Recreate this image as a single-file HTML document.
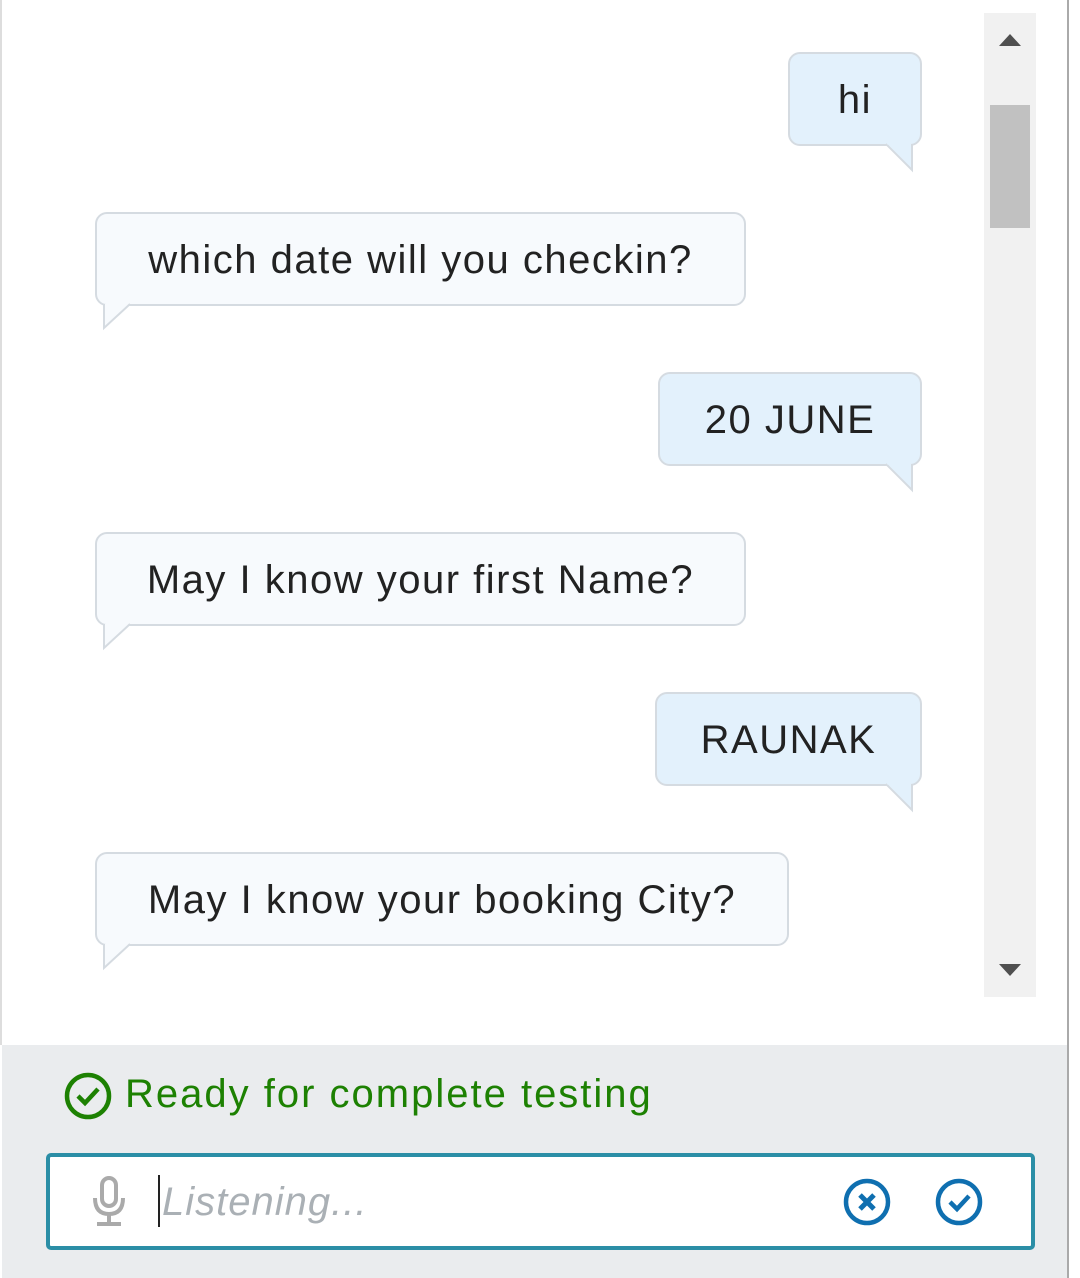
<!DOCTYPE html>
<html><head><meta charset="utf-8"><style>
body{margin:0;width:1080px;height:1278px;background:#fff;position:relative;overflow:hidden;font-family:"Liberation Sans",sans-serif;}
.b{position:absolute;height:94px;border:2px solid #d5dbe1;border-radius:12px;box-sizing:border-box;font-size:40px;letter-spacing:1.5px;color:#222;line-height:92px;text-align:center;white-space:nowrap;}
.u{background:#e3f1fc;}
.t{background:#f7fafd;}
svg.tail{position:absolute;overflow:visible}
</style></head><body>
<div style="position:absolute;left:0;top:0;width:2px;height:1045px;background:#ddd"></div>
<div style="position:absolute;left:1067px;top:0;width:2px;height:1278px;background:#aaa"></div>
<div style="position:absolute;left:984px;top:13px;width:52px;height:984px;background:#f1f1f1"></div>
<div style="position:absolute;left:990px;top:105px;width:40px;height:123px;background:#c1c1c1"></div>
<div style="position:absolute;left:999px;top:34px;width:0;height:0;border-left:11px solid transparent;border-right:11px solid transparent;border-bottom:12px solid #505050"></div>
<div style="position:absolute;left:999px;top:964px;width:0;height:0;border-left:11px solid transparent;border-right:11px solid transparent;border-top:12px solid #505050"></div>

<div class="b u" style="left:788px;top:52px;width:134px">hi</div>
<svg class="tail" style="left:0;top:0" width="1" height="1"><path d="M886 144 L912 170 L912 144" fill="#e3f1fc" stroke="#d5dbe1" stroke-width="2"/><path d="M887 143 L910 143" stroke="#e3f1fc" stroke-width="3"/></svg>

<div class="b t" style="left:95px;top:212px;width:651px">which date will you checkin?</div>
<svg class="tail" style="left:0;top:0" width="1" height="1"><path d="M104 304 L104 328 L130 304" fill="#f7fafd" stroke="#d5dbe1" stroke-width="2"/><path d="M106 303 L128 303" stroke="#f7fafd" stroke-width="3"/></svg>

<div class="b u" style="left:658px;top:372px;width:264px">20 JUNE</div>
<svg class="tail" style="left:0;top:0" width="1" height="1"><path d="M886 464 L912 490 L912 464" fill="#e3f1fc" stroke="#d5dbe1" stroke-width="2"/><path d="M887 463 L910 463" stroke="#e3f1fc" stroke-width="3"/></svg>

<div class="b t" style="left:95px;top:532px;width:651px">May I know your first Name?</div>
<svg class="tail" style="left:0;top:0" width="1" height="1"><path d="M104 624 L104 648 L130 624" fill="#f7fafd" stroke="#d5dbe1" stroke-width="2"/><path d="M106 623 L128 623" stroke="#f7fafd" stroke-width="3"/></svg>

<div class="b u" style="left:655px;top:692px;width:267px">RAUNAK</div>
<svg class="tail" style="left:0;top:0" width="1" height="1"><path d="M886 784 L912 810 L912 784" fill="#e3f1fc" stroke="#d5dbe1" stroke-width="2"/><path d="M887 783 L910 783" stroke="#e3f1fc" stroke-width="3"/></svg>

<div class="b t" style="left:95px;top:852px;width:694px">May I know your booking City?</div>
<svg class="tail" style="left:0;top:0" width="1" height="1"><path d="M104 944 L104 968 L130 944" fill="#f7fafd" stroke="#d5dbe1" stroke-width="2"/><path d="M106 943 L128 943" stroke="#f7fafd" stroke-width="3"/></svg>

<div style="position:absolute;left:2px;top:1045px;width:1065px;height:233px;background:#eaecee"></div>
<svg style="position:absolute;left:62px;top:1070px" width="52" height="52"><circle cx="26" cy="26" r="21" fill="none" stroke="#1d8102" stroke-width="4.5"/><path d="M16 26 L23 33 L36 19" fill="none" stroke="#1d8102" stroke-width="4.5"/></svg>
<div style="position:absolute;left:125px;top:1069px;font-size:40px;letter-spacing:2px;color:#1d8102;line-height:50px;white-space:nowrap">Ready for complete testing</div>

<div style="position:absolute;left:46px;top:1153px;width:989px;height:97px;box-sizing:border-box;border:4px solid #2b8ea6;border-radius:5px;background:#fff"></div>
<svg style="position:absolute;left:88px;top:1176px" width="44" height="52"><rect x="14" y="2" width="14" height="28" rx="7" fill="none" stroke="#aaa" stroke-width="4"/><path d="M7 22 Q7 38 21 38 Q35 38 35 22 M21 38 V46 M9 48 H33" fill="none" stroke="#aaa" stroke-width="4"/></svg>
<div style="position:absolute;left:158px;top:1175px;width:2px;height:52px;background:#222"></div>
<div style="position:absolute;left:162px;top:1178px;font-size:40px;letter-spacing:1px;font-style:italic;color:#aab0b5;line-height:48px">Listening...</div>
<svg style="position:absolute;left:842px;top:1177px" width="50" height="50"><circle cx="25" cy="25" r="21" fill="none" stroke="#0f6fb0" stroke-width="4.5"/><path d="M18 18 L32 32 M32 18 L18 32" stroke="#0f6fb0" stroke-width="5"/></svg>
<svg style="position:absolute;left:934px;top:1177px" width="50" height="50"><circle cx="25" cy="25" r="21" fill="none" stroke="#0f6fb0" stroke-width="4.5"/><path d="M16 25 L23 32 L35 19" fill="none" stroke="#0f6fb0" stroke-width="4.5"/></svg>
</body></html>
